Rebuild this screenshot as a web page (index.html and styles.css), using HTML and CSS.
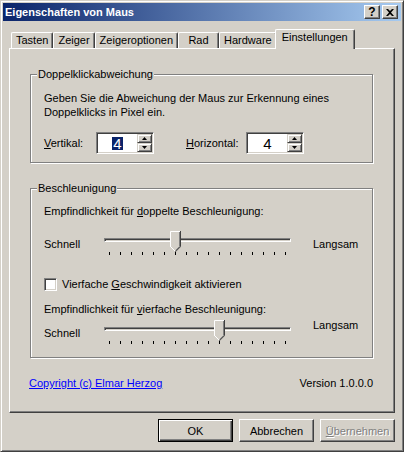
FILE: index.html
```html
<!doctype html>
<html lang="de">
  <head>
    <meta charset="UTF-8" />
    <title>Eigenschaften von Maus</title>
    <link rel="stylesheet" href="styles.css">
  </head>
  <body>
    <div class="window">
      <div class="titlebar">
        <span class="title">Eigenschaften von Maus</span>
        <span class="title-btn title-help">?</span>
        <span class="title-btn">
          <svg width="8" height="7" viewBox="0 0 8 7"><path d="M0 0h2l2 2 2-2h2L5 3.5 8 7H6L4 5 2 7H0l3-3.5z" fill="#000"/></svg>
        </span>
      </div>

      <div class="tabs">
        <div class="tab">Tasten</div>
        <div class="tab">Zeiger</div>
        <div class="tab">Zeigeroptionen</div>
        <div class="tab">Rad</div>
        <div class="tab">Hardware</div>
        <div class="tab tab-active">Einstellungen</div>
      </div>

      <div class="panel">
        <fieldset class="group">
          <legend>Doppelklickabweichung</legend>
          <p class="desc">Geben Sie die Abweichung der Maus zur Erkennung eines<br>Doppelklicks in Pixel ein.</p>
          <div class="spin-row">
            <span class="spin-label"><u>V</u>ertikal:</span>
            <div class="spin">
              <div class="spin-value"><span class="selected">4</span></div>
              <div class="spin-buttons">
                <span class="spin-btn"><svg width="5" height="3" viewBox="0 0 5 3"><path d="M2.5 0L5 3H0z" fill="#000"/></svg></span>
                <span class="spin-btn"><svg width="5" height="3" viewBox="0 0 5 3"><path d="M0 0h5L2.5 3z" fill="#000"/></svg></span>
              </div>
            </div>
            <span class="spin-label spin-label-h"><u>H</u>orizontal:</span>
            <div class="spin">
              <div class="spin-value"><span>4</span></div>
              <div class="spin-buttons">
                <span class="spin-btn"><svg width="5" height="3" viewBox="0 0 5 3"><path d="M2.5 0L5 3H0z" fill="#000"/></svg></span>
                <span class="spin-btn"><svg width="5" height="3" viewBox="0 0 5 3"><path d="M0 0h5L2.5 3z" fill="#000"/></svg></span>
              </div>
            </div>
          </div>
        </fieldset>

        <fieldset class="group group-accel">
          <legend>Beschleunigung</legend>
          <p class="desc">Empfindlichkeit für <u>d</u>oppelte Beschleunigung:</p>
          <div class="slider-row">
            <span class="slider-label">Schnell</span>
            <div class="slider">
              <div class="track"></div>
              <div class="ticks"></div>
              <svg class="thumb" style="left: 66px" width="11" height="21" viewBox="0 0 11 21">
                <path d="M0 0H11V16L5.5 21.5 0 16z" fill="#d4d0c8"/>
                <path d="M0.5 16V0.5H10M0.5 15.5L5.5 20.5" stroke="#fff" fill="none"/>
                <path d="M10.5 0V15.7L5.3 20.9" stroke="#404040" fill="none"/>
                <path d="M9.5 1V15.5L5.5 19.5" stroke="#808080" fill="none"/>
              </svg>
            </div>
            <span>Langsam</span>
          </div>

          <div class="check-row">
            <span class="checkbox"></span>
            <span>Vierfache <u>G</u>eschwindigkeit aktivieren</span>
          </div>

          <p class="desc desc-second">Empfindlichkeit für <u>v</u>ierfache Beschleunigung:</p>
          <div class="slider-row slider-row-second">
            <span class="slider-label">Schnell</span>
            <div class="slider">
              <div class="track"></div>
              <div class="ticks"></div>
              <svg class="thumb" style="left: 110px" width="11" height="21" viewBox="0 0 11 21">
                <path d="M0 0H11V16L5.5 21.5 0 16z" fill="#d4d0c8"/>
                <path d="M0.5 16V0.5H10M0.5 15.5L5.5 20.5" stroke="#fff" fill="none"/>
                <path d="M10.5 0V15.7L5.3 20.9" stroke="#404040" fill="none"/>
                <path d="M9.5 1V15.5L5.5 19.5" stroke="#808080" fill="none"/>
              </svg>
            </div>
            <span class="label-high">Langsam</span>
          </div>
        </fieldset>

        <div class="footer">
          <a class="link" href="#">Copyright (c) Elmar Herzog</a>
          <span>Version 1.0.0.0</span>
        </div>
      </div>

      <div class="buttons">
        <button class="btn btn-default">OK</button>
        <button class="btn">Abbrechen</button>
        <button class="btn" disabled><u>Ü</u>bernehmen</button>
      </div>
    </div>
  </body>
</html>
```

FILE: styles.css
```css
* {
  box-sizing: border-box;
}
body {
  margin: 0;
  background: #d4d0c8;
  font: 11px "Liberation Sans", Arial, sans-serif;
  color: #000;
}
.window {
  width: 404px;
  height: 452px;
  padding: 2px;
  border: 1px solid;
  border-color: #d4d0c8 #404040 #404040 #d4d0c8;
  box-shadow: inset 1px 1px #fff, inset -1px -1px #808080;
  display: flex;
  flex-direction: column;
}
.titlebar {
  flex: none;
  height: 18px;
  padding: 0 3px 0 2px;
  display: flex;
  align-items: center;
  background: linear-gradient(to right, #0a246a, #a6caf0);
  color: #fff;
  font-weight: bold;
}
.title {
  flex: 1;
}
.title-btn {
  width: 16px;
  height: 14px;
  margin-left: 2px;
  display: flex;
  align-items: center;
  justify-content: center;
  background: #d4d0c8;
  border: 1px solid;
  border-color: #fff #404040 #404040 #fff;
  box-shadow: inset -1px -1px #808080;
  color: #000;
}
.title-help {
  font-size: 12px;
  line-height: 12px;
}

/* tabs */
.tabs {
  flex: none;
  height: 19px;
  margin: 8px 6px 0;
  padding-left: 2px;
  display: flex;
  align-items: flex-end;
}
.tab {
  min-width: 41px;
  height: 16px;
  padding: 0 4px;
  line-height: 14px;
  text-align: center;
  border: 1px solid;
  border-bottom: 0;
  border-color: #fff #404040 #fff #fff;
  border-radius: 2px 2px 0 0;
  box-shadow: inset -1px 0 #808080;
}
.tab-active {
  position: relative;
  z-index: 1;
  height: 20px;
  margin: 0 -2px -1px;
  padding: 0 6px;
  line-height: 15px;
  background: #d4d0c8;
}

/* page */
.panel {
  flex: none;
  height: 365px;
  margin: 0 6px;
  padding: 19px 21px 0 20px;
  border: 1px solid;
  border-color: #fff #404040 #404040 #fff;
  box-shadow: inset -1px -1px #808080;
}
.group {
  margin: 0;
  min-width: 0;
  padding: 10px 13px 8px;
  border: 1px solid #808080;
  box-shadow: inset 1px 1px #fff, 1px 1px #fff;
}
.group legend {
  margin-left: -7px;
  padding: 0 1px;
  line-height: 13px;
  background: #d4d0c8;
}
.group-accel {
  margin-top: 19px;
  padding: 9px 13px 12px;
}
.desc {
  margin: 0;
  line-height: 14px;
  white-space: nowrap;
}
.desc-second {
  margin-top: 11px;
}

/* spin boxes */
.spin-row {
  margin-top: 13px;
  display: flex;
  align-items: center;
}
.spin-label {
  width: 52px;
}
.spin-label-h {
  width: 60px;
  margin-left: 32px;
}
.spin {
  width: 58px;
  height: 22px;
  padding: 1px;
  display: flex;
  background: #fff;
  border: 1px solid;
  border-color: #808080 #fff #fff #808080;
  box-shadow: inset 1px 1px #404040, inset -1px -1px #d4d0c8;
}
.spin-value {
  flex: 1;
  display: flex;
  align-items: center;
  justify-content: center;
  font-size: 15px;
}
.spin-value span {
  padding: 0 1px;
  line-height: 13px;
}
.spin-value .selected {
  background: #0a246a;
  color: #fff;
}
.spin-buttons {
  width: 15px;
  display: flex;
  flex-direction: column;
}
.spin-btn {
  flex: 1;
  display: flex;
  align-items: center;
  justify-content: center;
  background: #d4d0c8;
  border: 1px solid;
  border-color: #d4d0c8 #404040 #404040 #d4d0c8;
  box-shadow: inset 1px 1px #fff, inset -1px -1px #808080;
}

/* sliders */
.slider-row {
  height: 25px;
  margin-top: 13px;
  display: flex;
  align-items: center;
}
.slider-row-second {
  margin-top: 4px;
}
.slider-label {
  width: 60px;
}
.slider {
  position: relative;
  width: 187px;
  height: 25px;
  margin-right: 22px;
}
.track {
  height: 4px;
  margin-top: 7px;
  border: 1px solid;
  border-color: #808080 #fff #fff #808080;
  box-shadow: inset 1px 1px #404040;
}
.ticks {
  height: 3px;
  margin: 10px 5px 0;
  background: repeating-linear-gradient(to right, #000 0 1px, transparent 1px 11px);
}
.thumb {
  position: absolute;
  top: 0;
}
.label-high {
  align-self: flex-start;
  line-height: 11px;
}

/* checkbox */
.check-row {
  margin-top: 22px;
  display: flex;
  align-items: center;
  gap: 5px;
  line-height: 13px;
}
.checkbox {
  width: 13px;
  height: 13px;
  background: #fff;
  border: 1px solid;
  border-color: #808080 #fff #fff #808080;
  box-shadow: inset 1px 1px #404040, inset -1px -1px #d4d0c8;
}

/* footer */
.footer {
  margin: 19px 0 0 -1px;
  display: flex;
  justify-content: space-between;
  line-height: 13px;
}
.link {
  color: #0000ff;
}

/* buttons */
.buttons {
  margin-top: 6px;
  padding-right: 6px;
  display: flex;
  justify-content: flex-end;
  gap: 6px;
}
.btn {
  width: 75px;
  height: 23px;
  padding: 0;
  font: inherit;
  color: #000;
  background: #d4d0c8;
  border: 1px solid;
  border-color: #fff #404040 #404040 #fff;
  box-shadow: inset -1px -1px #808080;
}
.btn-default {
  border-color: #000;
  box-shadow: inset 1px 1px #fff, inset -1px -1px #404040, inset -2px -2px #808080;
}
.btn:disabled {
  color: #808080;
  text-shadow: 1px 1px #fff;
}
```
